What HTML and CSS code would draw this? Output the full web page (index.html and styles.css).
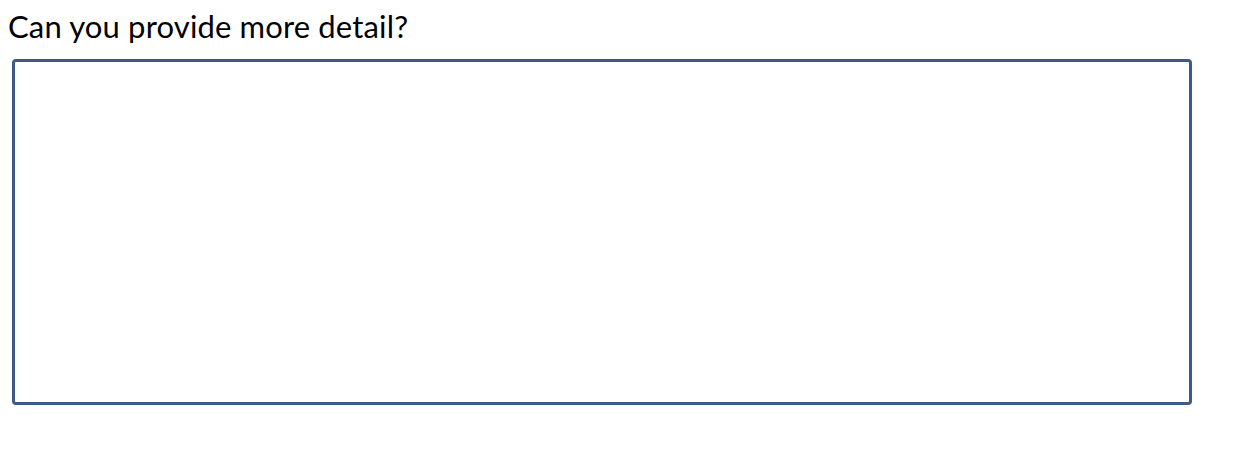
FILE: index.html
```html
<!DOCTYPE html>
<html>
<head><link rel="stylesheet" href="styles.css"></head>
<body>
<form class="form">
  <label class="label" for="detail">Can you provide more detail?</label>
  <textarea class="field" id="detail"></textarea>
</form>
</body>
</html>
```
FILE: styles.css
```css
html, body { margin: 0; padding: 0; background: #fff; }
.form { display: flex; flex-direction: column; align-items: flex-start; padding: 8px 0 0 8px; }
.label { font-family: "Lato", "Noto Sans", sans-serif; font-size: 31px; line-height: 37px; letter-spacing: 0.15px; color: #000; }
.field {
  display: block;
  box-sizing: border-box;
  width: 1180px;
  height: 346px;
  margin: 14px 0 0 4px;
  border: 3px solid #3e5a86;
  border-radius: 4px;
  background: #fff;
  resize: none;
  outline: none;
  padding: 4px;
}
```
